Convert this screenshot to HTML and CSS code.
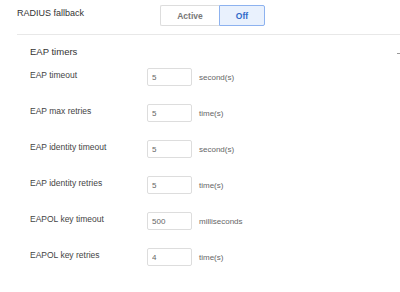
FILE: index.html
```html
<!DOCTYPE html>
<html lang="en">
<head>
    <meta charset="UTF-8">
    <title>RADIUS settings</title>
    <link rel="stylesheet" href="styles.css">
</head>
<body>
    <div class="fallback">
        <span class="fb-label">RADIUS fallback</span>
        <div class="seg">
            <button class="seg-btn">Active</button>
            <button class="seg-btn on">Off</button>
        </div>
    </div>

    <section class="timers">
        <div class="timers-head">
            <h3>EAP timers</h3>
            <span class="collapse"></span>
        </div>

        <div class="row">
            <label>EAP timeout</label>
            <div class="field"><input value="5"><span class="unit">second(s)</span></div>
        </div>
        <div class="row">
            <label>EAP max retries</label>
            <div class="field"><input value="5"><span class="unit">time(s)</span></div>
        </div>
        <div class="row">
            <label>EAP identity timeout</label>
            <div class="field"><input value="5"><span class="unit">second(s)</span></div>
        </div>
        <div class="row">
            <label>EAP identity retries</label>
            <div class="field"><input value="5"><span class="unit">time(s)</span></div>
        </div>
        <div class="row">
            <label>EAPOL key timeout</label>
            <div class="field"><input value="500"><span class="unit">milliseconds</span></div>
        </div>
        <div class="row">
            <label>EAPOL key retries</label>
            <div class="field"><input value="4"><span class="unit">time(s)</span></div>
        </div>
    </section>
</body>
</html>
```

FILE: styles.css
```css
body {
    margin: 0;
    background: #fff;
    color: #333;
    font-family: "Liberation Sans", Arial, sans-serif;
    font-size: 9px;
    overflow: hidden;
}
.fallback {
    display: flex;
    align-items: flex-start;
    box-sizing: border-box;
    height: 35px;
    margin-left: 17px;
    border-bottom: 1px solid #e8e8e8;
}
.fb-label {
    width: 143px;
    padding-top: 7px;
    line-height: 12px;
    font-size: 9px;
    color: #333;
}
.seg {
    display: flex;
    margin-top: 5px;
    height: 21px;
}
.seg-btn {
    box-sizing: border-box;
    width: 59px;
    height: 21px;
    padding: 0;
    background: #fff;
    border: 1px solid #ddd;
    border-right: none;
    border-radius: 2px 0 0 2px;
    font-family: inherit;
    font-size: 8.5px;
    font-weight: bold;
    color: #777;
}
.seg-btn.on {
    width: 46px;
    border: 1px solid #8db2ef;
    border-radius: 0 2px 2px 0;
    background: #e9f1fd;
    color: #2f69c9;
}
.timers {
    padding-left: 30px;
}
.timers-head {
    display: flex;
    justify-content: space-between;
    align-items: flex-start;
    margin-top: 11px;
    height: 22px;
}
.timers-head h3 {
    margin: 0;
    font-size: 9.5px;
    font-weight: normal;
    line-height: 12px;
    color: #333;
}
.collapse {
    width: 3px;
    height: 1px;
    margin-top: 7px;
    background: #999;
}
.row {
    display: flex;
    align-items: flex-start;
    height: 36px;
}
.row label {
    width: 117px;
    padding-top: 1px;
    line-height: 12px;
    font-size: 8.5px;
    color: #444;
}
.field {
    display: flex;
    align-items: center;
}
.field input {
    box-sizing: border-box;
    width: 45px;
    height: 18px;
    margin: 0;
    padding: 0 4px;
    border: 1px solid #ddd;
    border-radius: 2px;
    font-family: inherit;
    font-size: 8px;
    color: #666;
    outline: none;
}
.unit {
    margin-left: 7px;
    font-size: 8px;
    color: #666;
}
```
